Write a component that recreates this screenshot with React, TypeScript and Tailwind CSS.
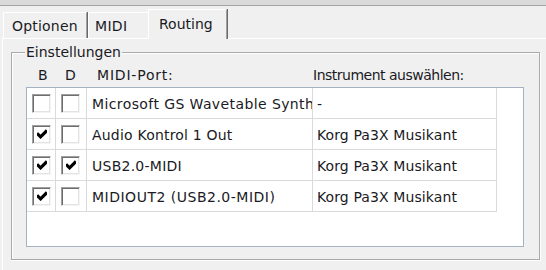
type Row = {
  b: boolean;
  d: boolean;
  port: string;
  portClass: string;
  instrument: string;
};

const rows: Row[] = [
  { b: false, d: false, port: 'Microsoft GS Wavetable Synth', portClass: 'tracking-[0.4px]', instrument: '-' },
  { b: true, d: false, port: 'Audio Kontrol 1 Out', portClass: 'tracking-[0.2px]', instrument: 'Korg Pa3X Musikant' },
  { b: true, d: true, port: 'USB2.0-MIDI', portClass: 'tracking-[0.25px]', instrument: 'Korg Pa3X Musikant' },
  { b: true, d: false, port: 'MIDIOUT2 (USB2.0-MIDI)', portClass: 'tracking-[0.5px]', instrument: 'Korg Pa3X Musikant' },
];

function CheckBox({ checked }: { checked: boolean }) {
  return (
    <span className="flex h-[19px] w-[19px] items-center justify-center border border-t-[#a0a0a0] border-l-[#a0a0a0] border-r-[#f4f4f4] border-b-[#f4f4f4] bg-white shadow-[inset_1px_1px_0_#6e6e6e,inset_-1px_-1px_0_#e3e3e3]">
      {checked && (
        <svg width="10" height="10" viewBox="0 0 7 7" className="-mt-[1px]">
          <path d="M0 3 L2.5 5.5 L7 1" fill="none" stroke="#000" strokeWidth="2.2" />
        </svg>
      )}
    </span>
  );
}

export default function App() {
  return (
    <div className="flex h-[270px] w-[546px] flex-col overflow-hidden bg-[#f0f0f0] font-['DejaVu_Sans',sans-serif] text-[14px] leading-[17px] text-[#1a1a24]">
      <div className="h-[6px] border-b border-[#a3a3a3] bg-[#dadada]" />

      {/* tabs */}
      <div className="flex h-[32px] items-end pl-[3px]">
        <div className="flex h-[26px] w-[84px] items-center border-l border-t border-r border-l-white border-t-white border-r-[#a0a0a0] pl-[8px] pt-[2px] tracking-[0.2px] shadow-[1px_0_0_#696969]">
          Optionen
        </div>
        <div className="ml-[1px] flex h-[26px] w-[62px] items-center border-l border-t border-white pl-[6px] pt-[2px] tracking-[0.3px]">
          MIDI
        </div>
        <div className="relative z-10 -mb-px -ml-[2px] flex h-[30px] w-[79px] items-center border-l border-t border-r border-l-white border-t-white border-r-[#a0a0a0] bg-[#f0f0f0] pb-[1px] pl-[10px] shadow-[1px_0_0_#696969]">
          Routing
        </div>
      </div>

      {/* panel */}
      <div className="ml-[2px] flex-1 border-l border-t border-white">
        <div className="relative ml-[8px] mt-[13px] h-[208px] w-[529px] border border-[#a9a9a9] shadow-[inset_1px_1px_0_#fff,1px_1px_0_#fff]">
          <span className="absolute -top-[9px] left-[13px] bg-[#f0f0f0] px-[1px]">Einstellungen</span>

          <div className="ml-[15px] mt-[14px] flex h-[17px]">
            <div className="w-[29px] pl-[11px]">B</div>
            <div className="w-[31px] pl-[9px]">D</div>
            <div className="w-[226px] pl-[10px] tracking-[0.8px]">MIDI-Port:</div>
            <div className="w-[184px] tracking-[-0.5px]">Instrument auswählen:</div>
          </div>

          <div className="ml-[14px] mt-[3px] h-[160px] w-[498px] border border-[#a4b2c2] bg-white">
            {rows.map((r, i) => (
              <div key={i} className="flex h-[31px] w-[470px] border-b border-[#dadada]">
                <div className="flex w-[29px] items-center border-r border-[#dadada] pl-[5px]">
                  <CheckBox checked={r.b} />
                </div>
                <div className="flex w-[31px] items-center border-r border-[#dadada] pl-[5px]">
                  <CheckBox checked={r.d} />
                </div>
                <div className={`flex w-[226px] items-center overflow-hidden whitespace-nowrap border-r border-[#dadada] pl-[5px] pt-[2px] ${r.portClass}`}>
                  {r.port}
                </div>
                <div className="flex w-[184px] items-center overflow-hidden whitespace-nowrap border-r border-[#dadada] pl-[4px] pt-[2px] tracking-[0.1px]">
                  {r.instrument}
                </div>
              </div>
            ))}
          </div>
        </div>
      </div>
    </div>
  );
}
